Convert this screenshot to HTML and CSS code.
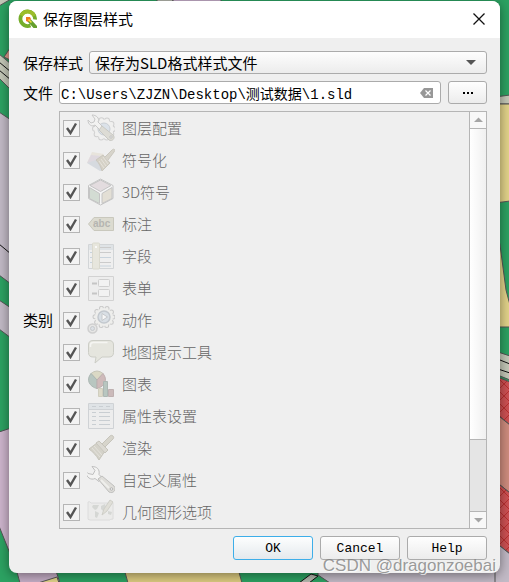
FILE: index.html
```html
<!DOCTYPE html>
<html lang="zh-CN">
<head>
    <meta charset="UTF-8">
    <meta name="viewport" content="width=device-width, initial-scale=1.0">
    <title>保存图层样式</title>
    <link rel="stylesheet" href="styles.css">
</head>
<body>
    <!-- Map canvas behind the dialog -->
    <svg class="map" viewBox="0 0 509 582" preserveAspectRatio="none" aria-hidden="true">
        <defs>
            <pattern id="hatch" width="12" height="12" patternUnits="userSpaceOnUse">
                <rect width="12" height="12" fill="#cf5254"/>
                <path d="M0 0l12 12M12 0L0 12" stroke="#b93030"/>
            </pattern>
        </defs>
        <rect width="509" height="582" fill="#2ca262"/>
        <g stroke="#555">
            <path d="M-1-1h12L-1 6z" fill="#c4c8b8"/>
            <path d="M157-1h16v8h-16z" fill="#b5b8ae"/>
            <path d="M173-1h48v8h-48z" fill="#c8b0cc"/>
            <path d="M4 57l8-12v16z" fill="#dd9a8c"/>
            <path d="M-1 54l12 10v26L-1 78z" fill="#c4c8b8"/>
            <path d="M-1 62l12 10M-1 70l12 10" stroke="#111"/>
            <path d="M-1 112l12 8v164l-12-9z" fill="#c2bac6"/>
            <path d="M-1 244l12 10" stroke="#111"/>
            <path d="M-1 300l12 8v30l-12-9z" fill="#c2bac6"/>
            <path d="M-1 432l12-4v128l-12-30z" fill="#cdb4cc"/>
            <path d="M15 565h39l6 18H20z" fill="#c5aec6"/>
            <path d="M38 583l19-6 2 6z" fill="#e2d38a"/>
            <path d="M123 565h114l5 18H128z" fill="#dccb80"/>
            <path d="M318 565h192v18H330l-12-8z" fill="#c2bac6"/>
            <path d="M299 583l12-9 7 2-9 7z" fill="#b5b8ae" stroke="#111"/>
            <path d="M495 97l15-2v9h-15z" fill="#c4c8b8"/>
            <path d="M495 104h15v97l-15 2z" fill="#e2d38a"/>
            <path d="M495 220l5 25 6 45 4 15v22h-15z" fill="#e2d38a"/>
            <path d="M495 351l15 5v24l-15-6z" fill="#c4c8b8"/>
            <path d="M495 358l15 6M495 368l15 5" stroke="#111"/>
            <path d="M495 376l15 6v43l-15-12z" fill="url(#hatch)"/>
            <path d="M495 413l15 12v68l-15-12z" fill="#cf8c7e"/>
            <path d="M495 481l15 12v61l-15-12z" fill="url(#hatch)"/>
            <path d="M495 542l15 12v29h-15z" fill="#c2bac6"/>
        </g>
    </svg>

    <main class="dialog">
        <header class="titlebar">
            <svg class="logo" viewBox="0 0 20 20" aria-hidden="true">
                <path d="M12.500 16.500A7.300 7.300 0 1 1 17 10.500" fill="none" stroke="#75ad2b" stroke-width="3.800"/>
                <path d="M3.200 6.500A7.300 7.300 0 0 1 16.300 7" fill="none" stroke="#9cbd2c" stroke-width="3.600"/>
                <path d="M10 10l3 .5 6 6.500V19h-3.500L10 13z" fill="#659f2e"/>
                <path d="M8 8h4l1 2-3 3-2-1z" fill="#ee7a22"/>
                <path d="M10.500 10.500l3 3" stroke="#f7dd3c" stroke-width="1.500"/>
            </svg>
            <h1 class="title">保存图层样式</h1>
            <button type="button" class="close" aria-label="关闭">
                <svg viewBox="0 0 12 12"><path d="M.5.5l11 11M11.500.5l-11 11" stroke="#111" stroke-width="1.300"/></svg>
            </button>
        </header>

        <form class="content">
            <div class="row">
                <label for="style-format">保存样式</label>
                <select id="style-format" class="combo">
                    <option>保存为SLD格式样式文件</option>
                    <option>保存为QGIS QML样式文件</option>
                </select>
            </div>

            <div class="row">
                <label for="file">文件</label>
                <div class="file-box">
                    <input type="text" id="file" class="file-input" value="C:\Users\ZJZN\Desktop\测试数据\1.sld">
                    <button type="button" class="clear" aria-label="清除">
                        <svg viewBox="0 0 13 10">
                            <path d="M4 0h9v10H4L0 5z" fill="#979797"/>
                            <path d="M5.500 2.500l5 5M10.500 2.500l-5 5" stroke="#fff" stroke-width="1.200"/>
                        </svg>
                    </button>
                </div>
                <button type="button" class="button browse" aria-label="浏览">
                    <svg viewBox="0 0 12 2"><path d="M1 0h2v2H1zM5 0h2v2H5zM9 0h2v2H9z"/></svg>
                </button>
            </div>

            <div class="row">
                <span class="row-label" id="categories-label">类别</span>
                <div class="list-box">
                    <ul class="list" aria-labelledby="categories-label">
                        <li><label class="item">
                            <input type="checkbox" checked disabled>
                            <svg class="icon" viewBox="0 0 28 28">
                                <g fill="none" stroke-linecap="round" stroke-dasharray="0 5.650">
                                    <circle cx="17" cy="15" r="9" stroke="#d0d0d0" stroke-width="6"/>
                                    <circle cx="17" cy="15" r="9" stroke="#f0f0ef" stroke-width="4"/>
                                </g>
                                <circle cx="17" cy="15" r="9.500" fill="#f0f0ef"/>
                                <circle cx="17" cy="15" r="6" fill="#dbe2e9" stroke="#cacfd4"/>
                                <path d="M5 1l3 4-1 3-3 1-3-3c0 5 4 7 7 5l5 5 3-3-5-5c2-4-2-7-6-7z" fill="#f2f2f1" stroke="#c8c8c8"/>
                                <path d="M12 16l3-4 11 9c3 3-1 7-4 5z" fill="#dddcd5" stroke="#c8c8c3"/>
                                <circle cx="24" cy="23" r="1.200" fill="#eee" stroke="#c2c2c2"/>
                            </svg>
                            <span>图层配置</span>
                        </label></li>
                        <li><label class="item">
                            <input type="checkbox" checked disabled>
                            <svg class="icon" viewBox="0 0 28 28">
                                <path d="M5 6l12 2-5 8-12 1z" fill="#e8e4dc"/>
                                <path d="M4 9l10 1-6 6-8 1z" fill="#dfd9df"/>
                                <path d="M0 17l9-3 8 10-4 1z" fill="#d6dadf"/>
                                <path d="M9 14l7-5 7 8-8 8c-1-4-3-8-6-11z" fill="#d5d1c6" stroke="#cac7be"/>
                                <path d="M12 15l5 7M14 13l5 7M16 11l5 7" stroke="#e6e3dc"/>
                                <path d="M18 11l7-7c2-2 4 0 2 2l-6 8" fill="#d7d4cb" stroke="#cac7be"/>
                            </svg>
                            <span>符号化</span>
                        </label></li>
                        <li><label class="item">
                            <input type="checkbox" checked disabled>
                            <svg class="icon" viewBox="0 0 28 28" stroke="#c4c4c4" stroke-linejoin="round">
                                <path d="M13.500 1L26 7.500v13L13.500 27 1.500 20.500v-13z" fill="#f5f5f5"/>
                                <path d="M13.500 2L24 7.500l-10.500 6L3 7.500z" fill="#e3dcdf"/>
                                <path d="M2.500 9.500l10 6v10l-10-5z" fill="#d3dcd3"/>
                                <path d="M25 9.500l-10 6v10l10-5z" fill="#e3dfd5"/>
                            </svg>
                            <span>3D符号</span>
                        </label></li>
                        <li><label class="item">
                            <input type="checkbox" checked disabled>
                            <svg class="icon" viewBox="0 0 28 28">
                                <path d="M7 7.500h19.500v13H7L1.500 14z" fill="#dcdbd0" stroke="#c9c8bd"/>
                                <text class="icon-text" x="6" y="17">abc</text>
                            </svg>
                            <span>标注</span>
                        </label></li>
                        <li><label class="item">
                            <input type="checkbox" checked disabled>
                            <svg class="icon" viewBox="0 0 28 28">
                                <path d="M1.500 2.500h25v24h-25z" fill="#efefef" stroke="#d2d5d7"/>
                                <path d="M2 3h24v5H2z" fill="#dfe3e6"/>
                                <path d="M13 5.500h11M13 10.500h11M13 20.500h11" stroke="#cbcbcb"/>
                                <path d="M3 10.500h3M3 15.500h3M3 20.500h3M13 15.500h11M13 24h11" stroke="#c8d3dc"/>
                                <rect x="5.500" y="1" width="7" height="26" rx="1" fill="#e7e6dd" stroke="#dad9ce"/>
                                <circle cx="9" cy="5" r="1" fill="#fff"/>
                            </svg>
                            <span>字段</span>
                        </label></li>
                        <li><label class="item">
                            <input type="checkbox" checked disabled>
                            <svg class="icon" viewBox="0 0 28 28">
                                <path d="M1.500 2.500h25v24h-25z" fill="#ededed" stroke="#d2d2d2"/>
                                <path d="M5 9.500h5M5 19.500h5" stroke="#c5c5c5" stroke-width="2"/>
                                <rect x="11.500" y="5.500" width="11" height="7" rx="1" fill="#f2f2f2" stroke="#cfcfcf"/>
                                <rect x="11.500" y="15.500" width="11" height="7" rx="1" fill="#f2f2f2" stroke="#cfcfcf"/>
                            </svg>
                            <span>表单</span>
                        </label></li>
                        <li><label class="item">
                            <input type="checkbox" checked disabled>
                            <svg class="icon" viewBox="0 0 28 28">
                                <g fill="none" stroke-linecap="round" stroke-dasharray="0 5.650">
                                    <circle cx="17" cy="11" r="9" stroke="#c9c9c9" stroke-width="5"/>
                                    <circle cx="17" cy="11" r="9" stroke="#eeeeec" stroke-width="3"/>
                                </g>
                                <circle cx="17" cy="11" r="9" fill="#eeeeec"/>
                                <circle cx="17" cy="11" r="6" fill="#d9dfe5" stroke="#c3c8ce" stroke-width="1.500"/>
                                <path d="M15 7.500l5.500 3.500-5.500 3.500z" fill="#f7f7f7" stroke="#c5c8cb"/>
                                <circle cx="5.500" cy="22.500" r="4.500" fill="#e6e6e5" stroke="#cfcfcf" stroke-width="1.500"/>
                                <circle cx="5.500" cy="22.500" r="2" fill="#dce0e5" stroke="#c6c9cc"/>
                            </svg>
                            <span>动作</span>
                        </label></li>
                        <li><label class="item">
                            <input type="checkbox" checked disabled>
                            <svg class="icon" viewBox="0 0 28 28">
                                <path d="M6 2.500h16q4.500 0 4.500 4.500v7.500q0 4.500-4.500 4.500h-7l-7 6 1-6H6q-4.500 0-4.500-4.500V7Q1.500 2.500 6 2.500z" fill="#e5e5de" stroke="#cccdc6"/>
                                <path d="M3.500 9V7q0-2.500 3-2.500h14" fill="none" stroke="#f5f5f2" stroke-width="1.500"/>
                            </svg>
                            <span>地图提示工具</span>
                        </label></li>
                        <li><label class="item">
                            <input type="checkbox" checked disabled>
                            <svg class="icon" viewBox="0 0 28 28">
                                <path d="M10 10L4 3.500Q10-1.500 16 3.500z" fill="#dbd9c5" stroke="#c7c6b8"/>
                                <path d="M10 10L4 3.500c-5 6-2 13 6 15z" fill="#b8c6c0" stroke="#acb7b3"/>
                                <path d="M10 10l6-6.500c5 6 2 13-6 15z" fill="#cfbaba" stroke="#beb0b0"/>
                                <path d="M11.500 18.500h4v8h-4z" fill="#dddac9" stroke="#d0cebf"/>
                                <path d="M16.500 11.500h4v15h-4z" fill="#b8c6c0" stroke="#acb7b3"/>
                                <path d="M21.500 19.500h5v7h-5z" fill="#cbbaba" stroke="#beb0b0"/>
                            </svg>
                            <span>图表</span>
                        </label></li>
                        <li><label class="item">
                            <input type="checkbox" checked disabled>
                            <svg class="icon" viewBox="0 0 28 28">
                                <path d="M1.500 1.500h25v25h-25z" fill="#ededed" stroke="#cfd2d5"/>
                                <path d="M2 2h24v5H2z" fill="#dfe3e6"/>
                                <path d="M1.500 7.500h25" stroke="#cfd2d5"/>
                                <path d="M5 4.500h4M12 4.500h4M19 4.500h4M5 10.500h4M12 10.500h11M5 14.500h4M12 14.500h11M5 18.500h4M12 18.500h11M5 22.500h4M12 22.500h11" stroke="#c9ced2"/>
                            </svg>
                            <span>属性表设置</span>
                        </label></li>
                        <li><label class="item">
                            <input type="checkbox" checked disabled>
                            <svg class="icon" viewBox="0 0 28 28">
                                <path d="M2 15l8-6 8 8-6 9c-3-5-6-8-10-11z" fill="#d4d2c9" stroke="#c6c4bb"/>
                                <path d="M5 14l8 9M7 12l8 9M10 10l7 8" stroke="#e4e2dc"/>
                                <path d="M9 9l3-2 9 9-3 3z" fill="#dbd9d2" stroke="#c6c4bb"/>
                                <path d="M15 10l8-8c2-2 5 1 3 3l-8 8z" fill="#d7d5cc" stroke="#c6c4bb"/>
                            </svg>
                            <span>渲染</span>
                        </label></li>
                        <li><label class="item">
                            <input type="checkbox" checked disabled>
                            <svg class="icon" viewBox="0 0 28 28">
                                <path d="M5 .5l3 4-2 4-5-1-2-2c0 6 5 9 9 7l4 3 3-4-3-3c1-5-2-8-7-8z" fill="#f3f3f2" stroke="#bfbfbf"/>
                                <path d="M11 13l4-3 12 10c3 4-1 8-5 6z" fill="#deddd9" stroke="#bfbfbd"/>
                                <path d="M14 14l8 8" stroke="#efefec" stroke-width="2"/>
                                <circle cx="24.500" cy="23" r="1.300" fill="#eee" stroke="#b5b5b5"/>
                            </svg>
                            <span>自定义属性</span>
                        </label></li>
                        <li><label class="item">
                            <input type="checkbox" checked disabled>
                            <svg class="icon" viewBox="0 0 28 28">
                                <path d="M1 4q2-1 3 1h22v16q-3 0-3 1H3q-3 0-2-3z" fill="#ebebea" stroke="#dcdcdc"/>
                                <path d="M6 7h6l-2 4-2 1-3-3zM8 13l4 2-2 5-2-1zM14 8l4-2 1 4-3 3-2-2zM21 13l4 1-1 3-3-1z" fill="#d5d7d4"/>
                                <path d="M15 17l2-6 6-9 3 2-6 9z" fill="#e0dfd8" stroke="#cfcfc8"/>
                            </svg>
                            <span>几何图形选项</span>
                        </label></li>
                    </ul>
                    <div class="scrollbar" aria-hidden="true">
                        <svg class="arrow" viewBox="0 0 16 16"><path d="M4 10l4.500-4.500L13 10z" fill="#a5a5a5"/></svg>
                        <div class="thumb"></div>
                        <div class="track"></div>
                        <svg class="arrow" viewBox="0 0 16 16"><path d="M4 6h9l-4.500 4.500z" fill="#a5a5a5"/></svg>
                    </div>
                </div>
            </div>

            <div class="buttons">
                <button type="submit" class="button default">OK</button>
                <button type="button" class="button">Cancel</button>
                <button type="button" class="button">Help</button>
            </div>
        </form>
    </main>

    <div class="watermark">CSDN @dragonzoebai</div>
</body>
</html>
```
FILE: styles.css
```css
* {
    box-sizing: border-box;
}

body {
    margin: 0;
    min-height: 100vh;
    padding: 1px 9px 9px;
    position: relative;
    background-color: #2ca262;
    color: #000;
    font-family: "Noto Sans CJK SC", sans-serif;
    font-size: 15px;
    line-height: 20px;
}

svg {
    display: block;
}

button {
    cursor: pointer;
}

.map {
    position: absolute;
    top: 0;
    left: 0;
    width: 100%;
    height: 100%;
}

.dialog {
    position: relative;
    background-color: #efefef;
    border-radius: 8px;
    overflow: hidden;
    box-shadow: 0 2px 12px rgba(0, 0, 0, 0.45);
}

/* Title bar */
.titlebar {
    display: flex;
    align-items: center;
    gap: 5px;
    height: 37px;
    padding: 0 14px 2px 9px;
    background-color: #fff;
}

.logo {
    width: 20px;
    height: 20px;
}

.title {
    flex: 1;
    margin: 0;
    font-size: 15px;
    font-weight: normal;
}

.close {
    padding: 1px;
    border: none;
    background: none;
}

.close svg {
    width: 12px;
    height: 12px;
}

/* Form */
.content {
    display: flex;
    flex-direction: column;
    gap: 7px;
    padding: 13px 13px 13px 14px;
}

.row {
    display: flex;
    align-items: center;
    gap: 6px;
}

.combo,
.file-box,
.button {
    height: 23px;
    border: 1px solid #ababab;
    border-radius: 3px;
}

.combo {
    flex: 1;
    min-width: 0;
    padding: 0 24px 0 5px;
    appearance: none;
    color: #000;
    font: inherit;
    line-height: 20px;
    background: url("data:image/svg+xml,%3Csvg xmlns='http://www.w3.org/2000/svg' width='10' height='5'%3E%3Cpath d='M0 0h10L5 5z' fill='%23555'/%3E%3C/svg%3E") no-repeat right 10px center, linear-gradient(#fdfdfd, #ececec);
}

.file-box {
    display: flex;
    flex: 1;
    align-items: center;
    min-width: 0;
    padding: 0 7px 0 1px;
    background-color: #fff;
}

.file-input {
    flex: 1;
    min-width: 0;
    height: 20px;
    padding: 0;
    border: none;
    outline: none;
    background: none;
    font-family: "Liberation Mono", "Noto Sans CJK SC", monospace;
    font-size: 14px;
}

.clear {
    padding: 0;
    border: none;
    background: none;
}

.clear svg {
    width: 13px;
    height: 10px;
}

.button {
    width: 80px;
    height: 24px;
    padding: 0;
    background: linear-gradient(#fefefe, #ececec);
    color: #000;
    font-family: "Liberation Mono", monospace;
    font-size: 13px;
}

.button.default {
    border-color: #3daee9;
    background: linear-gradient(#fdfefe, #e4e9ed);
}

.browse {
    width: 39px;
    height: 23px;
    margin-left: 1px;
}

.browse svg {
    width: 12px;
    height: 2px;
    margin: 0 auto;
}

.buttons {
    display: flex;
    justify-content: flex-end;
    gap: 7px;
}

/* Category list */
.list-box {
    display: flex;
    flex: 1;
    border: 1px solid #b5b5b5;
}

.list {
    flex: 1;
    margin: 0;
    padding: 0;
    list-style: none;
}

.item {
    display: flex;
    align-items: center;
    gap: 7px;
    height: 32px;
    padding-left: 3px;
    color: #666;
    font-weight: 300;
}

.item input {
    width: 17px;
    height: 17px;
    margin: 0;
    appearance: none;
    border: 1px solid #b5b5b5;
    background: #f3f3f3 url("data:image/svg+xml,%3Csvg xmlns='http://www.w3.org/2000/svg' width='13' height='13'%3E%3Cpath d='M2 6l3.500 5L11 1.500' fill='none' stroke='%23555' stroke-width='2.400'/%3E%3C/svg%3E") no-repeat center;
}

.icon {
    width: 28px;
    height: 28px;
}

.icon-text {
    fill: #b5b5b0;
    font-family: "Liberation Sans", sans-serif;
    font-size: 10px;
    font-weight: bold;
}

.scrollbar {
    display: flex;
    flex-direction: column;
    width: 17px;
    border-left: 1px solid #b5b5b5;
    background-color: #e5e5e5;
}

.arrow {
    width: 16px;
    height: 16px;
    background-color: #f8f8f8;
}

.thumb {
    flex: 13;
    border-top: 1px solid #b5b5b5;
    border-bottom: 1px solid #b5b5b5;
    background: linear-gradient(to right, #fff, #f0f0f0);
}

.track {
    flex: 3;
    border-bottom: 1px solid #b5b5b5;
}

.watermark {
    position: absolute;
    right: 13px;
    bottom: 8px;
    color: rgba(130, 130, 130, 0.8);
    font-family: "Liberation Sans", sans-serif;
    font-size: 17px;
    line-height: 17px;
    text-shadow: 1px 1px 0 rgba(255, 255, 255, 0.7);
    pointer-events: none;
}
```
